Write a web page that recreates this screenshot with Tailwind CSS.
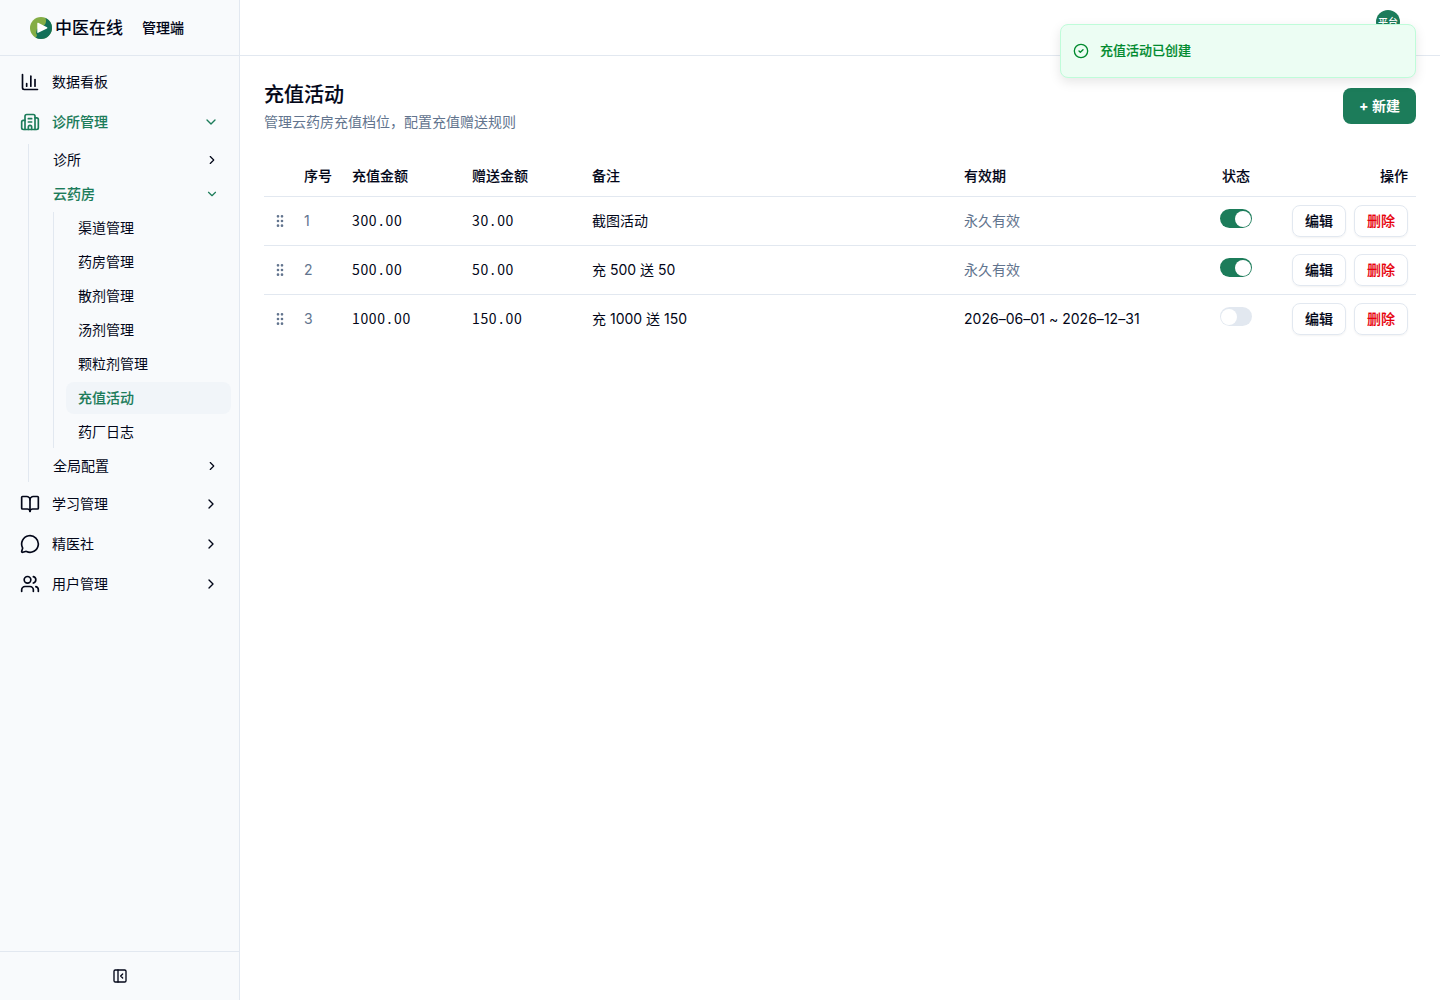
<!DOCTYPE html>
<html lang="zh-CN">
<head>
<meta charset="utf-8">
<title>充值活动</title>
<script src="https://cdn.jsdelivr.net/npm/@tailwindcss/browser@4"></script>
</head>
<body class="h-screen overflow-hidden bg-white font-['Inter','Noto_Sans_CJK_SC',sans-serif] text-sm text-[#020618]">
<svg class="hidden">
  <symbol id="right" viewBox="0 0 24 24"><path d="m9 18 6-6-6-6"/></symbol>
  <symbol id="down" viewBox="0 0 24 24"><path d="m6 9 6 6 6-6"/></symbol>
  <symbol id="grip" viewBox="0 0 24 24"><circle cx="9" cy="12" r="1"/><circle cx="9" cy="5" r="1"/><circle cx="9" cy="19" r="1"/><circle cx="15" cy="12" r="1"/><circle cx="15" cy="5" r="1"/><circle cx="15" cy="19" r="1"/></symbol>
</svg>
<div class="flex h-full">
  <aside class="flex w-60 shrink-0 flex-col border-r border-slate-200 bg-slate-50">
    <div class="flex h-14 shrink-0 items-center border-b border-slate-200 pl-[30px]">
      <svg class="size-[22px]" viewBox="0 0 22 22"><circle cx="11" cy="11" r="11" fill="#84ad45"/><path d="M15.500 1A11 11 0 0 1 22 11A11 11 0 0 1 11 22Q8 22 5.500 20.500Q8 19 6 16L7 12L14.500 8Q17 5 15.500 1Z" fill="#137058"/><path d="M7.300 6.300v9q0 1 .9.500l8.800-4.200q1-.7 0-1.400l-8.800-4.400q-.9-.4-.9.500Z" fill="#fff"/></svg>
      <span class="ml-[3px] text-[17px] font-medium leading-6">中医在线</span>
      <span class="ml-[19px] font-medium [-webkit-text-stroke:0.1px]">管理端</span>
    </div>
    <nav class="flex flex-1 flex-col gap-1 p-2">
      <a class="flex h-9 items-center gap-3 px-3"><svg class="size-5" viewBox="0 0 24 24" fill="none" stroke="currentColor" stroke-width="2" stroke-linecap="round" stroke-linejoin="round"><path d="M3 3v16a2 2 0 0 0 2 2h16"/><path d="M18 17V9"/><path d="M13 17V5"/><path d="M8 17v-3"/></svg><span class="flex-1">数据看板</span></a>
      <a class="flex h-9 items-center gap-3 px-3 font-medium text-[#1c7c5a]"><svg class="size-5" viewBox="0 0 24 24" fill="none" stroke="currentColor" stroke-width="2" stroke-linecap="round" stroke-linejoin="round"><path d="M10 12h4"/><path d="M10 8h4"/><path d="M14 21v-3a2 2 0 0 0-4 0v3"/><path d="M6 10H4a2 2 0 0 0-2 2v7a2 2 0 0 0 2 2h16a2 2 0 0 0 2-2V9a2 2 0 0 0-2-2h-2"/><path d="M6 21V5a2 2 0 0 1 2-2h8a2 2 0 0 1 2 2v16"/></svg><span class="flex-1 [-webkit-text-stroke:0.1px]">诊所管理</span><svg class="size-4 fill-none stroke-current stroke-2" stroke-linecap="round" stroke-linejoin="round"><use href="#down"/></svg></a>
      <div class="ml-5 flex flex-col gap-0.5 border-l border-slate-200 pl-3">
        <a class="flex h-8 items-center px-3"><span class="flex-1">诊所</span><svg class="size-3.5 fill-none stroke-current stroke-2" stroke-linecap="round" stroke-linejoin="round"><use href="#right"/></svg></a>
        <a class="flex h-8 items-center px-3 font-medium text-[#1c7c5a]"><span class="flex-1 [-webkit-text-stroke:0.1px]">云药房</span><svg class="size-3.5 fill-none stroke-current stroke-2" stroke-linecap="round" stroke-linejoin="round"><use href="#down"/></svg></a>
        <div class="ml-3 flex flex-col gap-0.5 border-l border-slate-200 pl-3">
          <a class="flex h-8 items-center px-3">渠道管理</a>
          <a class="flex h-8 items-center px-3">药房管理</a>
          <a class="flex h-8 items-center px-3">散剂管理</a>
          <a class="flex h-8 items-center px-3">汤剂管理</a>
          <a class="flex h-8 items-center px-3">颗粒剂管理</a>
          <a class="flex h-8 items-center rounded-lg bg-slate-100 px-3 font-medium text-[#1c7c5a] [-webkit-text-stroke:0.1px]">充值活动</a>
          <a class="flex h-8 items-center px-3">药厂日志</a>
        </div>
        <a class="flex h-8 items-center px-3"><span class="flex-1">全局配置</span><svg class="size-3.5 fill-none stroke-current stroke-2" stroke-linecap="round" stroke-linejoin="round"><use href="#right"/></svg></a>
      </div>
      <a class="flex h-9 items-center gap-3 px-3"><svg class="size-5" viewBox="0 0 24 24" fill="none" stroke="currentColor" stroke-width="2" stroke-linecap="round" stroke-linejoin="round"><path d="M12 7v14"/><path d="M3 18a1 1 0 0 1-1-1V4a1 1 0 0 1 1-1h5a4 4 0 0 1 4 4 4 4 0 0 1 4-4h5a1 1 0 0 1 1 1v13a1 1 0 0 1-1 1h-6a3 3 0 0 0-3 3 3 3 0 0 0-3-3z"/></svg><span class="flex-1">学习管理</span><svg class="size-4 fill-none stroke-current stroke-2" stroke-linecap="round" stroke-linejoin="round"><use href="#right"/></svg></a>
      <a class="flex h-9 items-center gap-3 px-3"><svg class="size-5" viewBox="0 0 24 24" fill="none" stroke="currentColor" stroke-width="2" stroke-linecap="round" stroke-linejoin="round"><path d="M2.992 16.342a2 2 0 0 1 .094 1.167l-1.065 3.290a1 1 0 0 0 1.236 1.168l3.413-.998a2 2 0 0 1 1.099.092 10 10 0 1 0-4.777-4.719"/></svg><span class="flex-1">精医社</span><svg class="size-4 fill-none stroke-current stroke-2" stroke-linecap="round" stroke-linejoin="round"><use href="#right"/></svg></a>
      <a class="flex h-9 items-center gap-3 px-3"><svg class="size-5" viewBox="0 0 24 24" fill="none" stroke="currentColor" stroke-width="2" stroke-linecap="round" stroke-linejoin="round"><path d="M16 21v-2a4 4 0 0 0-4-4H6a4 4 0 0 0-4 4v2"/><path d="M16 3.128a4 4 0 0 1 0 7.744"/><path d="M22 21v-2a4 4 0 0 0-3-3.870"/><circle cx="9" cy="7" r="4"/></svg><span class="flex-1">用户管理</span><svg class="size-4 fill-none stroke-current stroke-2" stroke-linecap="round" stroke-linejoin="round"><use href="#right"/></svg></a>
    </nav>
    <div class="flex h-[49px] shrink-0 items-center justify-center border-t border-slate-200">
      <svg class="size-4" viewBox="0 0 24 24" fill="none" stroke="currentColor" stroke-width="2" stroke-linecap="round" stroke-linejoin="round"><rect width="18" height="18" x="3" y="3" rx="2"/><path d="M9 3v18"/><path d="m16 15-3-3 3-3"/></svg>
    </div>
  </aside>
  <div class="flex min-w-0 flex-1 flex-col">
    <header class="flex h-14 shrink-0 items-start justify-end border-b border-slate-200 pr-10 pt-2.5">
      <div class="flex size-6 items-center justify-center rounded-full bg-[#1c7c5a] text-[10px] font-medium text-white">平台</div>
    </header>
    <main class="flex-1 px-6 pt-6">
      <div class="flex h-[52px] items-center justify-between">
        <div>
          <h1 class="pt-px text-xl font-medium leading-7 [-webkit-text-stroke:0.15px]">充值活动</h1>
          <p class="mt-[3px] leading-5 text-slate-500">管理云药房充值档位，配置充值赠送规则</p>
        </div>
        <button class="h-9 w-[73px] rounded-lg bg-[#1c7c5a] font-bold text-white">+ 新建</button>
      </div>
      <table class="mt-6 w-full table-fixed border-separate border-spacing-0">
        <colgroup><col class="w-8"><col class="w-12"><col class="w-30"><col class="w-30"><col><col class="w-60"><col class="w-20"><col class="w-35"></colgroup>
        <thead>
          <tr class="text-left *:h-[41px] *:border-b *:border-slate-200 *:px-2 *:font-medium *:[-webkit-text-stroke:0.1px]"><th></th><th>序号</th><th>充值金额</th><th>赠送金额</th><th>备注</th><th>有效期</th><th class="text-center">状态</th><th class="text-right">操作</th></tr>
        </thead>
        <tbody>
          <tr class="*:h-[49px] *:border-b *:border-slate-200 *:px-2">
            <td><svg class="size-4 fill-none stroke-slate-500 stroke-2"><use href="#grip"/></svg></td>
            <td class="text-slate-500">1</td>
            <td class="pb-0.5 font-['Noto_Sans_CJK_SC',sans-serif] tracking-[0.63px]">300<span class="inline-block w-[8.4px] text-center">.</span>00</td>
            <td class="pb-0.5 font-['Noto_Sans_CJK_SC',sans-serif] tracking-[0.63px]">30<span class="inline-block w-[8.4px] text-center">.</span>00</td>
            <td>截图活动</td>
            <td class="text-slate-500">永久有效</td>
            <td><span class="mx-auto mb-[5px] flex h-[19px] w-8 items-center justify-end rounded-full bg-[#1c7c5a] px-px"><span class="size-4 rounded-full bg-white"></span></span></td>
            <td><div class="flex justify-end gap-2"><button class="h-8 w-[54px] rounded-lg border border-slate-200 font-medium shadow-xs [-webkit-text-stroke:0.15px]">编辑</button><button class="h-8 w-[54px] rounded-lg border border-slate-200 font-medium text-[#e7000b] shadow-xs [-webkit-text-stroke:0.15px]">删除</button></div></td>
          </tr>
          <tr class="*:h-[49px] *:border-b *:border-slate-200 *:px-2">
            <td><svg class="size-4 fill-none stroke-slate-500 stroke-2"><use href="#grip"/></svg></td>
            <td class="text-slate-500">2</td>
            <td class="pb-0.5 font-['Noto_Sans_CJK_SC',sans-serif] tracking-[0.63px]">500<span class="inline-block w-[8.4px] text-center">.</span>00</td>
            <td class="pb-0.5 font-['Noto_Sans_CJK_SC',sans-serif] tracking-[0.63px]">50<span class="inline-block w-[8.4px] text-center">.</span>00</td>
            <td>充 500 送 50</td>
            <td class="text-slate-500">永久有效</td>
            <td><span class="mx-auto mb-[5px] flex h-[19px] w-8 items-center justify-end rounded-full bg-[#1c7c5a] px-px"><span class="size-4 rounded-full bg-white"></span></span></td>
            <td><div class="flex justify-end gap-2"><button class="h-8 w-[54px] rounded-lg border border-slate-200 font-medium shadow-xs [-webkit-text-stroke:0.15px]">编辑</button><button class="h-8 w-[54px] rounded-lg border border-slate-200 font-medium text-[#e7000b] shadow-xs [-webkit-text-stroke:0.15px]">删除</button></div></td>
          </tr>
          <tr class="*:h-12 *:px-2">
            <td><svg class="size-4 fill-none stroke-slate-500 stroke-2"><use href="#grip"/></svg></td>
            <td class="text-slate-500">3</td>
            <td class="pb-0.5 font-['Noto_Sans_CJK_SC',sans-serif] tracking-[0.63px]">1000<span class="inline-block w-[8.4px] text-center">.</span>00</td>
            <td class="pb-0.5 font-['Noto_Sans_CJK_SC',sans-serif] tracking-[0.63px]">150<span class="inline-block w-[8.4px] text-center">.</span>00</td>
            <td>充 1000 送 150</td>
            <td class="tracking-[0.03px]">2026–06–01 ~ 2026–12–31</td>
            <td><span class="mx-auto mb-[5px] flex h-[19px] w-8 items-center rounded-full bg-slate-200 px-px"><span class="size-4 rounded-full bg-white"></span></span></td>
            <td><div class="flex justify-end gap-2"><button class="h-8 w-[54px] rounded-lg border border-slate-200 font-medium shadow-xs [-webkit-text-stroke:0.15px]">编辑</button><button class="h-8 w-[54px] rounded-lg border border-slate-200 font-medium text-[#e7000b] shadow-xs [-webkit-text-stroke:0.15px]">删除</button></div></td>
          </tr>
        </tbody>
      </table>
    </main>
  </div>
</div>
<div class="absolute right-6 top-6 flex h-[54px] w-[356px] items-center gap-[11px] rounded-lg border border-[#bffcd9] bg-[#ecfdf3] pl-3 text-[13px] font-medium text-[#008a2e] shadow-[0_4px_12px_rgba(0,0,0,0.1)]">
  <svg class="size-4" viewBox="0 0 24 24" fill="none" stroke="currentColor" stroke-width="2" stroke-linecap="round" stroke-linejoin="round"><circle cx="12" cy="12" r="10"/><path d="m9 12 2 2 4-4"/></svg>
  <span class="pb-0.5 [-webkit-text-stroke:0.15px]">充值活动已创建</span>
</div>
</body>
</html>
